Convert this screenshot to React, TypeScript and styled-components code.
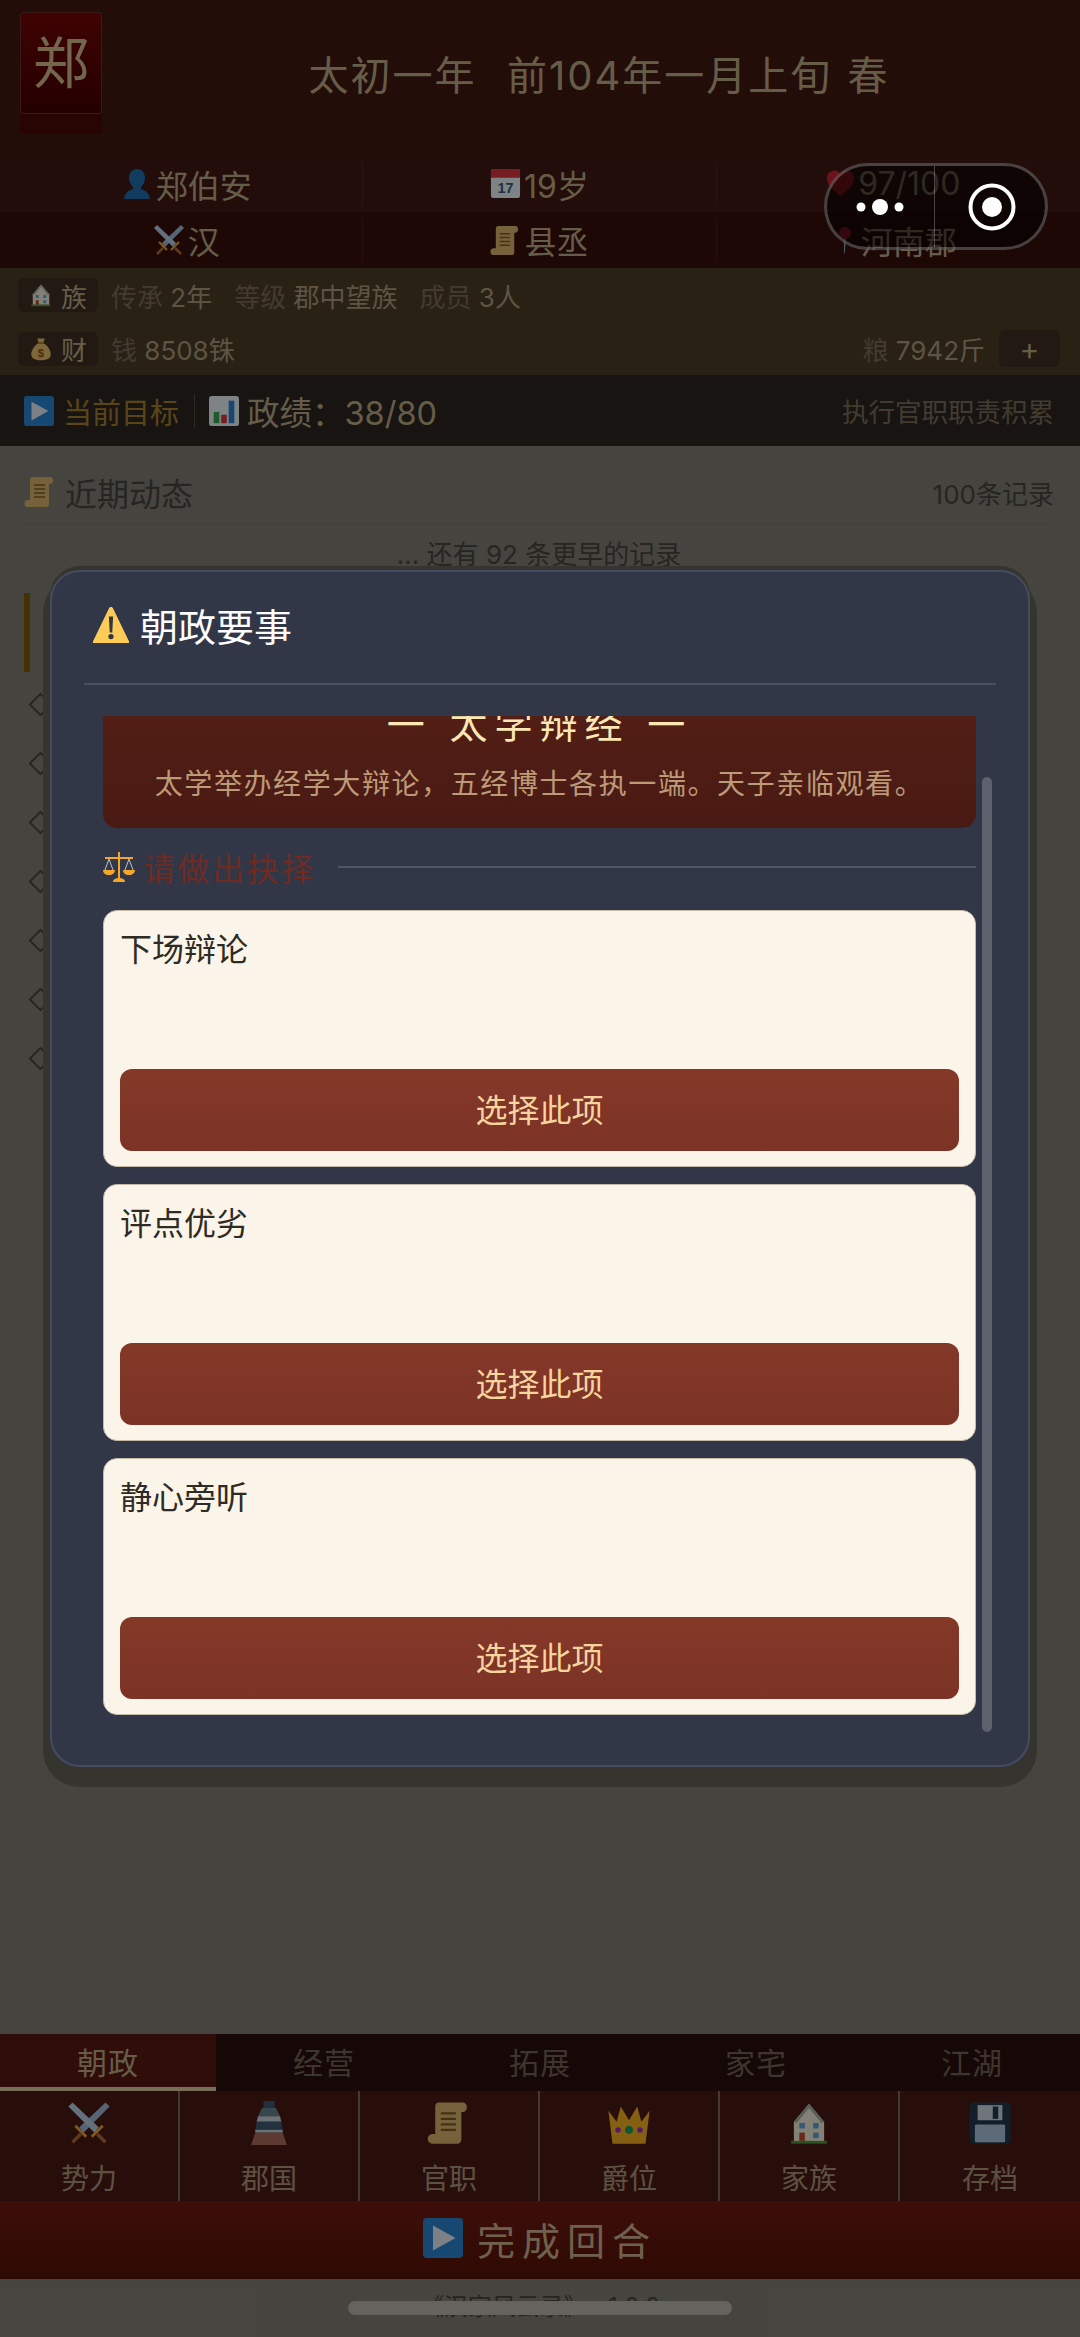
import styled, { createGlobalStyle } from "styled-components";

const GlobalStyle = createGlobalStyle`
    html, body {
        margin: 0;
        padding: 0;
        width: 1080px;
        height: 2337px;
        overflow: hidden;
        background: #7f7d74;
        font-family: Inter, "Noto Sans CJK SC", "Noto Sans", sans-serif;
    }
    * {
        box-sizing: border-box;
    }
`

const Glyph = styled.svg<{ $size: number }>`
    display: block;
    flex: none;
    width: ${(p) => p.$size}px;
    height: ${(p) => p.$size}px;
`

type IconProps = { size: number }

const Swords = ({ size }: IconProps) => (
    <Glyph $size={size} viewBox="0 0 32 32">
        <path d="M28 1l3 3L12 23l-3-4z" fill="#9db9d6" />
        <path d="M4 1L1 4l19 19 3-4z" fill="#b6cde4" />
        <path d="M6 18l8 8M26 18l-8 8" stroke="#e8a33a" strokeWidth="2" />
        <path d="M10 24l-6 6M22 24l6 6" stroke="#b0683c" strokeWidth="2.500" />
    </Glyph>
)

const Person = ({ size }: IconProps) => (
    <Glyph $size={size} viewBox="0 0 32 32">
        <path d="M16 1c5 0 8 4 8 9 0 4-2 7-4 9v2c3 1 8 3 9 10H3c1-7 6-9 9-10v-2c-2-2-4-5-4-9 0-5 3-9 8-9z" fill="#1f6db0" />
    </Glyph>
)

const Calendar = ({ size }: IconProps) => (
    <Glyph $size={size} viewBox="0 0 32 32">
        <rect x="1" y="1" width="30" height="30" rx="3" fill="#e6eef5" />
        <path d="M1 10V4a3 3 0 0 1 3-3h24a3 3 0 0 1 3 3v6z" fill="#d8363c" />
        <text x="16" y="26" textAnchor="middle" fontSize="15" fontWeight="700" fill="#3a5a78" fontFamily="Liberation Sans">17</text>
    </Glyph>
)

const Heart = ({ size }: IconProps) => (
    <Glyph $size={size} viewBox="0 0 32 32">
        <path d="M16 30C6 22 1 16 1 10a8 8 0 0 1 15-4 8 8 0 0 1 15 4c0 6-5 12-15 20z" fill="#c8202c" />
    </Glyph>
)

const Pin = ({ size }: IconProps) => (
    <Glyph $size={size} viewBox="0 0 32 32">
        <circle cx="17" cy="8" r="7" fill="#d02030" />
        <path d="M16 14h2l-1 17h-1z" fill="#8aa0b4" />
    </Glyph>
)

const Scroll = ({ size }: IconProps) => (
    <Glyph $size={size} viewBox="0 0 32 32">
        <path d="M8 1h19a4 4 0 0 1 0 7h-2v20a3 3 0 0 1-3 3H4a3 3 0 0 1 0-7h2V4a3 3 0 0 1 2-3z" fill="#d8b36a" />
        <path d="M10 9h11M10 13h11M10 17h11M10 21h11" stroke="#7d5c28" strokeWidth="1.500" />
    </Glyph>
)

const House = ({ size }: IconProps) => (
    <Glyph $size={size} viewBox="0 0 32 32">
        <path d="M16 2l11 13v14H5V15z" fill="#efe9d6" />
        <path d="M16 2l11 13-2 1-9-11-9 11-2-1z" fill="#9fb0a0" />
        <rect x="9" y="16" width="4" height="4" fill="#5da2dc" />
        <rect x="19" y="16" width="4" height="4" fill="#5da2dc" />
        <rect x="19" y="23" width="4" height="4" fill="#5da2dc" />
        <rect x="9" y="23" width="4" height="6" fill="#c0482e" />
        <rect x="3" y="29" width="26" height="2" fill="#4d9a3e" />
    </Glyph>
)

const MoneyBag = ({ size }: IconProps) => (
    <Glyph $size={size} viewBox="0 0 32 32">
        <path d="M11 2h10l-2 6c6 3 10 10 10 15 0 5-4 8-13 8S3 28 3 23c0-5 4-12 10-15z" fill="#e6bd6c" />
        <path d="M12 8h8" stroke="#96702e" strokeWidth="2" />
        <text x="16" y="26" textAnchor="middle" fontSize="15" fontWeight="700" fill="#7a5a22" fontFamily="Liberation Sans">$</text>
    </Glyph>
)

const Play = ({ size }: IconProps) => (
    <Glyph $size={size} viewBox="0 0 32 32">
        <rect width="32" height="32" rx="3" fill="#2b83cf" />
        <path d="M8 6l18 10L8 26z" fill="#e4ecf4" />
    </Glyph>
)

const Chart = ({ size }: IconProps) => (
    <Glyph $size={size} viewBox="0 0 32 32">
        <rect width="32" height="32" rx="3" fill="#e6eef5" />
        <rect x="5" y="17" width="6" height="12" fill="#3fa34d" />
        <rect x="13" y="20" width="6" height="9" fill="#d8363c" />
        <rect x="21" y="5" width="6" height="24" fill="#2b83cf" />
    </Glyph>
)

const Warning = ({ size }: IconProps) => (
    <Glyph $size={size} viewBox="0 0 36 36">
        <path d="M18 1c1 0 1.600.6 2 1.300l15 31c.5 1 0 1.700-1 1.700H2c-1 0-1.500-.7-1-1.700l15-31C16.400 1.600 17 1 18 1z" fill="#fdcb58" />
        <path d="M16 10h4l-.8 15h-2.400z" fill="#31373d" />
        <circle cx="18" cy="29" r="2.500" fill="#31373d" />
    </Glyph>
)

const Scales = ({ size }: IconProps) => (
    <Glyph $size={size} viewBox="0 0 32 32">
        <path d="M15 1h2v26h-2zM2 6h28v2H2z" fill="#f4a62a" />
        <path d="M6 8L2 19M6 8l4 11M26 8l-4 11M26 8l4 11" stroke="#b7c4d0" strokeWidth="1" fill="none" />
        <path d="M0 19h12c0 3-2.500 5-6 5s-6-2-6-5zM20 19h12c0 3-2.500 5-6 5s-6-2-6-5z" fill="#f4a62a" />
        <path d="M10 31c0-3 3-4 6-4s6 1 6 4z" fill="#f4a62a" />
    </Glyph>
)

const Castle = ({ size }: IconProps) => (
    <Glyph $size={size} viewBox="0 0 32 32">
        <rect x="12" y="0" width="8" height="5" fill="#3c5a70" />
        <path d="M11 5h10l3 6H8z" fill="#66828f" />
        <path d="M8 11h16l1 4H7z" fill="#c3cfd6" />
        <path d="M7 15h18l1 6H6z" fill="#3c5a70" />
        <path d="M6 21h20v2H6z" fill="#c3cfd6" />
        <path d="M6 23h20l3 9H3z" fill="#a86a5a" />
    </Glyph>
)

const Crown = ({ size }: IconProps) => (
    <Glyph $size={size} viewBox="0 0 32 32">
        <path d="M1 7l6 8 3-11 6 10 6-10 3 11 6-8-3 24H4z" fill="#f2b021" />
        <circle cx="16" cy="21" r="3" fill="#1f9d55" />
        <circle cx="8" cy="21" r="2" fill="#9a2fc0" />
        <circle cx="24" cy="21" r="2" fill="#9a2fc0" />
    </Glyph>
)

const Floppy = ({ size }: IconProps) => (
    <Glyph $size={size} viewBox="0 0 32 32">
        <rect x="1" y="1" width="30" height="30" rx="3" fill="#22384c" />
        <rect x="7" y="3" width="18" height="11" fill="#cdd6de" />
        <rect x="18" y="4" width="4" height="9" fill="#22384c" />
        <rect x="5" y="17" width="22" height="13" rx="1" fill="#a9c3dc" />
    </Glyph>
)

const Page = styled.div`
    position: relative;
    display: flex;
    flex-direction: column;
    width: 1080px;
    height: 2337px;
    overflow: hidden;
    background: #7f7d74;
`

const Header = styled.header`
    display: flex;
    align-items: flex-start;
    height: 155px;
    padding: 12px 20px 0;
    background: #3e1912;
`

const Emblem = styled.div`
    display: flex;
    align-items: center;
    justify-content: center;
    flex: none;
    width: 82px;
    height: 102px;
    border: 1px solid #702c2c;
    border-radius: 3px;
    background: linear-gradient(#740606, #430000);
    box-shadow: 0 20px 0 #4a0805;
    color: #d0ba8b;
    font-size: 56px;
    line-height: 1;
`

const DateLine = styled.div`
    flex: 1;
    margin: 34px 0 0 36px;
    color: #bba985;
    font-size: 40px;
    line-height: 60px;
    letter-spacing: 2px;
    word-spacing: 2px;
    text-align: center;
    white-space: pre;
`

const StatRow = styled.div<{ $dark?: boolean }>`
    display: grid;
    grid-template-columns: repeat(3, 1fr);
    align-items: center;
    height: ${(p) => (p.$dark ? 56 : 57)}px;
    padding: 0 10px;
    background: ${(p) => (p.$dark ? "#370f0b" : "#401913")};
`

const Stat = styled.div`
    display: flex;
    align-items: center;
    justify-content: center;
    gap: 3px;
    height: 44px;
    border-right: 1px solid rgba(255, 230, 190, 0.07);
    color: #bba985;
    font-size: 32px;
    &:last-child {
        border-right: none;
    }
`

const InfoRow = styled.div<{ $height: number }>`
    display: flex;
    align-items: center;
    height: ${(p) => p.$height}px;
    padding: 0 20px 0 18px;
    background: #4c3c26;
    font-size: 26px;
    color: #7a6c58;
`

const InfoBadge = styled.div`
    display: flex;
    align-items: center;
    justify-content: center;
    gap: 8px;
    width: 80px;
    height: 34px;
    margin-right: 13px;
    border-radius: 6px;
    background: #3c2f21;
    color: #bba985;
`

const InfoItem = styled.span`
    margin-right: 22px;
`

const InfoValue = styled.span`
    color: #aa9a7c;
`

const InfoPush = styled.span`
    margin: 0 14px 0 auto;
`

const PlusButton = styled.div`
    display: flex;
    align-items: center;
    justify-content: center;
    width: 61px;
    height: 37px;
    border-radius: 6px;
    background: #3c2f21;
    color: #bba985;
    font-size: 30px;
`

const GoalBar = styled.div`
    display: flex;
    align-items: center;
    height: 71px;
    padding: 0 26px 0 24px;
    background: #2c2621;
`

const GoalLabel = styled.span`
    margin-left: 9px;
    color: #a47f2d;
    font-size: 29px;
`

const GoalSplit = styled.span`
    width: 1px;
    height: 34px;
    margin: 0 14px 0 15px;
    background: rgba(255, 230, 190, 0.2);
`

const GoalValue = styled.span`
    margin-left: 8px;
    color: #bba985;
    font-size: 32.500px;
`

const GoalHint = styled.span`
    margin-left: auto;
    color: #7a6c58;
    font-size: 26.500px;
`

const LogPanel = styled.section`
    flex: 1;
    padding: 0 26px 0 24px;
`

const LogHead = styled.div`
    display: flex;
    align-items: center;
    gap: 9px;
    height: 79px;
    padding-top: 14px;
    border-bottom: 1px solid #76746b;
    color: #45443d;
    font-size: 32px;
`

const LogCount = styled.span`
    margin-left: auto;
    font-size: 26px;
`

const LogMore = styled.div`
    height: 68px;
    color: #45443d;
    font-size: 26px;
    line-height: 60px;
    text-align: center;
`

const LogCurrent = styled.div`
    position: relative;
    width: 6px;
    height: 79px;
    margin-bottom: 3px;
    background: #7a5a08;
    &::after {
        content: "";
        position: absolute;
        top: 32px;
        left: 24px;
        width: 14px;
        height: 14px;
        background: #111;
        transform: rotate(45deg);
    }
`

const LogItem = styled.div`
    display: flex;
    align-items: center;
    height: 59px;
`

const LogMark = styled.i`
    display: block;
    width: 17px;
    height: 17px;
    margin-left: 8px;
    border: 2px solid #45443d;
    transform: rotate(45deg);
`

const TabBar = styled.nav`
    display: grid;
    grid-template-columns: repeat(5, 1fr);
    height: 57px;
    background: #280f0b;
`

const Tab = styled.div<{ $active?: boolean }>`
    display: flex;
    align-items: center;
    justify-content: center;
    border-bottom: 4px solid ${(p) => (p.$active ? "#dcc8a2" : "transparent")};
    background: ${(p) => (p.$active ? "#58180f" : "transparent")};
    color: ${(p) => (p.$active ? "#bba985" : "#716254")};
    font-size: 30px;
    letter-spacing: 1px;
`

const ActionBar = styled.div`
    display: grid;
    grid-template-columns: repeat(6, 1fr);
    height: 110px;
    background: #491b14;
`

const Action = styled.div`
    display: flex;
    flex-direction: column;
    align-items: center;
    gap: 14px;
    padding-top: 10px;
    border-right: 2px solid #7c6a60;
    color: #a8947a;
    font-size: 28px;
    line-height: 40px;
    &:last-child {
        border-right: none;
    }
`

const EndTurn = styled.div`
    display: flex;
    align-items: center;
    justify-content: center;
    gap: 14px;
    height: 78px;
    padding-bottom: 4px;
    background: linear-gradient(#711a12, #541206);
    color: #c9b08d;
    font-size: 38px;
    letter-spacing: 7px;
`

const Footer = styled.footer`
    height: 58px;
    color: #45443d;
    font-size: 24px;
    line-height: 56px;
    text-align: center;
`

const Overlay = styled.div`
    position: absolute;
    inset: 0;
    display: flex;
    align-items: center;
    justify-content: center;
    background: rgba(0, 0, 0, 0.45);
`

const Modal = styled.div`
    position: relative;
    display: flex;
    flex-direction: column;
    width: 980px;
    height: 1197px;
    border: 2px solid #454b61;
    border-radius: 30px;
    background: #323748;
    box-shadow: 0 13px 0 7px #35342e, 0 -4px 0 0 #35342e;
`

const ModalHead = styled.div`
    display: flex;
    align-items: center;
    gap: 10px;
    height: 113px;
    margin: 0 32px;
    padding: 0 0 6px 8px;
    border-bottom: 2px solid #4a5063;
    color: #fdfdfd;
    font-size: 38px;
`

const ModalBody = styled.div`
    flex: 1;
    margin: 31px 52px 38px 51px;
    overflow: hidden;
`

const EventCard = styled.div`
    margin-top: -54px;
    padding: 34px 20px 24px;
    border-radius: 14px;
    background: linear-gradient(#562016, #491a13);
    text-align: center;
`

const EventTitle = styled.div`
    color: #fbe6b4;
    font-size: 38px;
    line-height: 56px;
    letter-spacing: 7px;
    white-space: pre;
`

const EventText = styled.div`
    margin-top: 12px;
    color: #bd9a78;
    font-size: 28px;
    line-height: 40px;
    letter-spacing: 1.600px;
`

const ChooseHead = styled.div`
    display: flex;
    align-items: center;
    gap: 8px;
    height: 40px;
    margin: 19px 0 23px;
    color: #6f2a21;
    font-size: 32px;
    letter-spacing: 2.600px;
    &::after {
        content: "";
        flex: 1;
        height: 2px;
        margin-left: 14px;
        background: #4f5468;
    }
`

const OptionList = styled.div`
    display: flex;
    flex-direction: column;
    gap: 17px;
`

const Option = styled.div`
    display: flex;
    flex-direction: column;
    justify-content: space-between;
    height: 257px;
    padding: 17px 16px 15px;
    border: 1px solid #c4baa6;
    border-radius: 14px;
    background: #fbf4e8;
`

const OptionName = styled.div`
    color: #2e2a24;
    font-size: 32px;
    line-height: 44px;
`

const OptionButton = styled.button`
    display: block;
    width: 100%;
    height: 82px;
    padding: 0 0 4px;
    border: none;
    border-radius: 12px;
    background: linear-gradient(#843828, #7c3325);
    color: #f6d49e;
    font-family: inherit;
    font-size: 32px;
`

const ScrollThumb = styled.div`
    position: absolute;
    top: 205px;
    right: 36px;
    width: 10px;
    height: 955px;
    border-radius: 5px;
    background: #5e626d;
`

const Capsule = styled.div`
    position: absolute;
    top: 163px;
    left: 824px;
    display: flex;
    align-items: center;
    width: 224px;
    height: 87px;
    border: 3px solid rgba(255, 255, 255, 0.24);
    border-radius: 44px;
    background: rgba(0, 0, 0, 0.55);
`

const CapsulePart = styled.div<{ $shift?: number }>`
    display: flex;
    align-items: center;
    justify-content: center;
    flex: 1;
    height: 100%;
    padding-left: ${(p) => p.$shift ?? 0}px;
    & + & {
        border-left: 1px solid rgba(255, 255, 255, 0.25);
    }
`

const HomeBar = styled.div`
    position: absolute;
    top: 2301px;
    left: 348px;
    width: 384px;
    height: 14px;
    border-radius: 7px;
    background: #64635d;
`

const tabs = ["朝政", "经营", "拓展", "家宅", "江湖"]

const actions = [
    { name: "势力", icon: Swords },
    { name: "郡国", icon: Castle },
    { name: "官职", icon: Scroll },
    { name: "爵位", icon: Crown },
    { name: "家族", icon: House },
    { name: "存档", icon: Floppy },
]

const options = ["下场辩论", "评点优劣", "静心旁听"]

const App = () => {
    return <Page>
        <GlobalStyle />
        <Header>
            <Emblem>郑</Emblem>
            <DateLine>太初一年  前104年一月上旬 春</DateLine>
        </Header>
        <StatRow>
            <Stat><Person size={32} />郑伯安</Stat>
            <Stat><Calendar size={31} />19岁</Stat>
            <Stat><Heart size={29} />97/100</Stat>
        </StatRow>
        <StatRow $dark>
            <Stat><Swords size={32} />汉</Stat>
            <Stat><Scroll size={31} />县丞</Stat>
            <Stat><Pin size={28} />河南郡</Stat>
        </StatRow>
        <InfoRow $height={54}>
            <InfoBadge><House size={24} />族</InfoBadge>
            <InfoItem>传承 <InfoValue>2年</InfoValue></InfoItem>
            <InfoItem>等级 <InfoValue>郡中望族</InfoValue></InfoItem>
            <InfoItem>成员 <InfoValue>3人</InfoValue></InfoItem>
        </InfoRow>
        <InfoRow $height={53}>
            <InfoBadge><MoneyBag size={24} />财</InfoBadge>
            <InfoItem>钱 <InfoValue>8508铢</InfoValue></InfoItem>
            <InfoPush>粮 <InfoValue>7942斤</InfoValue></InfoPush>
            <PlusButton>+</PlusButton>
        </InfoRow>
        <GoalBar>
            <Play size={30} />
            <GoalLabel>当前目标</GoalLabel>
            <GoalSplit />
            <Chart size={30} />
            <GoalValue>政绩：38/80</GoalValue>
            <GoalHint>执行官职职责积累</GoalHint>
        </GoalBar>
        <LogPanel>
            <LogHead>
                <Scroll size={32} />
                近期动态
                <LogCount>100条记录</LogCount>
            </LogHead>
            <LogMore>... 还有 92 条更早的记录</LogMore>
            <LogCurrent />
            {Array(7).fill(1).map((item: number, index: number) => (
                <LogItem key={index + item}><LogMark /></LogItem>
            ))}
        </LogPanel>
        <TabBar>
            {tabs.map((tab, index) => (
                <Tab key={tab} $active={index === 0}>{tab}</Tab>
            ))}
        </TabBar>
        <ActionBar>
            {actions.map(({ name, icon: Icon }) => (
                <Action key={name}>
                    <Icon size={44} />
                    {name}
                </Action>
            ))}
        </ActionBar>
        <EndTurn><Play size={40} />完成回合</EndTurn>
        <Footer>《汉家风云录》 v1.0.0</Footer>
        <Overlay>
            <Modal>
                <ModalHead><Warning size={38} />朝政要事</ModalHead>
                <ModalBody>
                    <EventCard>
                        <EventTitle>一 太学辩经 一</EventTitle>
                        <EventText>太学举办经学大辩论，五经博士各执一端。天子亲临观看。</EventText>
                    </EventCard>
                    <ChooseHead><Scales size={32} />请做出抉择</ChooseHead>
                    <OptionList>
                        {options.map((option) => (
                            <Option key={option}>
                                <OptionName>{option}</OptionName>
                                <OptionButton>选择此项</OptionButton>
                            </Option>
                        ))}
                    </OptionList>
                </ModalBody>
                <ScrollThumb />
            </Modal>
        </Overlay>
        <Capsule>
            <CapsulePart>
                <svg width="52" height="18" viewBox="0 0 52 18">
                    <circle cx="7" cy="9" r="4.500" fill="#fff" />
                    <circle cx="26" cy="9" r="8" fill="#fff" />
                    <circle cx="45" cy="9" r="4.500" fill="#fff" />
                </svg>
            </CapsulePart>
            <CapsulePart $shift={4}>
                <svg width="50" height="50" viewBox="0 0 50 50">
                    <circle cx="25" cy="25" r="21.500" fill="none" stroke="#fff" strokeWidth="4" />
                    <circle cx="25" cy="25" r="10" fill="#fff" />
                </svg>
            </CapsulePart>
        </Capsule>
        <HomeBar />
    </Page>
}

export default App;
